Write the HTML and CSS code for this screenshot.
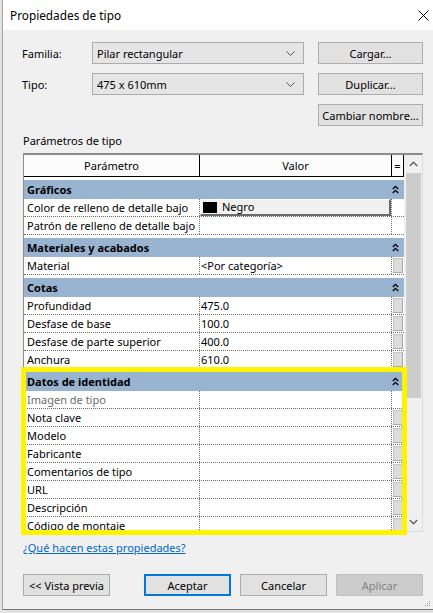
FILE: index.html
```html
<!DOCTYPE html>
<html lang="es">
<head>
<meta charset="utf-8">
<title>Propiedades de tipo</title>
<link rel="stylesheet" href="styles.css">
</head>
<body>
<div class="screen">
  <div class="dialog">
    <div class="titlebar">
      <span class="title">Propiedades de tipo</span>
      <svg class="close" width="11" height="11" viewBox="0 0 11 11"><path d="M0.5 0.5 L10.5 10.5 M10.5 0.5 L0.5 10.5" stroke="#000" stroke-width="1" fill="none"/></svg>
    </div>
    <div class="content">
      <div class="frow">
        <span class="flabel">Familia:</span>
        <div class="combo"><span>Pilar rectangular</span><svg width="9" height="5" viewBox="0 0 9 5"><path d="M0.5 0.5 L4.5 4.5 L8.5 0.5" stroke="#555" fill="none"/></svg></div>
        <div class="btn side">Cargar...</div>
      </div>
      <div class="frow">
        <span class="flabel">Tipo:</span>
        <div class="combo"><span>475 x 610mm</span><svg width="9" height="5" viewBox="0 0 9 5"><path d="M0.5 0.5 L4.5 4.5 L8.5 0.5" stroke="#555" fill="none"/></svg></div>
        <div class="btn side">Duplicar...</div>
      </div>
      <div class="frow end">
        <div class="btn side">Cambiar nombre...</div>
      </div>
      <div class="plabel">Parámetros de tipo</div>

      <div class="gridbox">
        <div class="grid">
          <div class="ghead">
            <div class="hc">Parámetro</div>
            <div class="hc hv">Valor</div>
            <div class="hc he">=</div>
          </div>
          <div class="gbody">
            <div class="sec"><div class="st">Gráficos</div><div></div><div class="sc"><svg width="7" height="9" viewBox="0 0 7 9"><path d="M0.8 4 L3.5 1.3 L6.2 4 M0.8 8 L3.5 5.3 L6.2 8" stroke="#000" stroke-width="1.3" fill="none"/></svg></div></div>
            <div class="row"><div class="c1">Color de relleno de detalle bajo</div><div class="c2"><div class="negro"><span class="swatch"></span>Negro</div></div><div class="c3"></div></div>
            <div class="row"><div class="c1">Patrón de relleno de detalle bajo</div><div class="c2"></div><div class="c3"></div></div>

            <div class="sec"><div class="st">Materiales y acabados</div><div></div><div class="sc"><svg width="7" height="9" viewBox="0 0 7 9"><path d="M0.8 4 L3.5 1.3 L6.2 4 M0.8 8 L3.5 5.3 L6.2 8" stroke="#000" stroke-width="1.3" fill="none"/></svg></div></div>
            <div class="row"><div class="c1">Material</div><div class="c2">&lt;Por categoría&gt;</div><div class="c3"><span class="eb"></span></div></div>

            <div class="sec"><div class="st">Cotas</div><div></div><div class="sc"><svg width="7" height="9" viewBox="0 0 7 9"><path d="M0.8 4 L3.5 1.3 L6.2 4 M0.8 8 L3.5 5.3 L6.2 8" stroke="#000" stroke-width="1.3" fill="none"/></svg></div></div>
            <div class="row"><div class="c1">Profundidad</div><div class="c2">475.0</div><div class="c3"><span class="eb"></span></div></div>
            <div class="row"><div class="c1">Desfase de base</div><div class="c2">100.0</div><div class="c3"><span class="eb"></span></div></div>
            <div class="row"><div class="c1">Desfase de parte superior</div><div class="c2">400.0</div><div class="c3"><span class="eb"></span></div></div>
            <div class="row"><div class="c1">Anchura</div><div class="c2">610.0</div><div class="c3"><span class="eb"></span></div></div>

            <div class="sec"><div class="st">Datos de identidad</div><div></div><div class="sc"><svg width="7" height="9" viewBox="0 0 7 9"><path d="M0.8 4 L3.5 1.3 L6.2 4 M0.8 8 L3.5 5.3 L6.2 8" stroke="#000" stroke-width="1.3" fill="none"/></svg></div></div>
            <div class="row"><div class="c1 dim">Imagen de tipo</div><div class="c2"></div><div class="c3"></div></div>
            <div class="row"><div class="c1">Nota clave</div><div class="c2"></div><div class="c3"><span class="eb"></span></div></div>
            <div class="row"><div class="c1">Modelo</div><div class="c2"></div><div class="c3"><span class="eb"></span></div></div>
            <div class="row"><div class="c1">Fabricante</div><div class="c2"></div><div class="c3"><span class="eb"></span></div></div>
            <div class="row"><div class="c1">Comentarios de tipo</div><div class="c2"></div><div class="c3"><span class="eb"></span></div></div>
            <div class="row"><div class="c1">URL</div><div class="c2"></div><div class="c3"><span class="eb"></span></div></div>
            <div class="row"><div class="c1">Descripción</div><div class="c2"></div><div class="c3"><span class="eb"></span></div></div>
            <div class="row"><div class="c1">Código de montaje</div><div class="c2"></div><div class="c3"><span class="eb"></span></div></div>
          </div>
        </div>
        <div class="scrollbar">
          <div class="sarrow"><svg width="9" height="6" viewBox="0 0 9 6"><path d="M0.8 5 L4.5 1.3 L8.2 5" stroke="#606060" stroke-width="1.4" fill="none"/></svg></div>
          <div class="thumb"></div>
          <div class="strack"></div>
          <div class="sarrow"><svg width="9" height="6" viewBox="0 0 9 6"><path d="M0.8 1 L4.5 4.7 L8.2 1" stroke="#606060" stroke-width="1.4" fill="none"/></svg></div>
        </div>
        <div class="highlight"></div>
      </div>

      <a class="help" href="#">¿Qué hacen estas propiedades?</a>

      <div class="buttons">
        <div class="btn bb first">&lt;&lt; Vista previa</div>
        <div class="btn bb default">Aceptar</div>
        <div class="btn bb">Cancelar</div>
        <div class="btn bb disabled">Aplicar</div>
      </div>
    </div>
    <svg class="grip" width="6" height="6" viewBox="0 0 6 6"><rect x="4" y="0" width="1" height="1" fill="#9a9a9a"/><rect x="2" y="2" width="1" height="1" fill="#9a9a9a"/><rect x="4" y="2" width="1" height="1" fill="#9a9a9a"/><rect x="0" y="4" width="1" height="1" fill="#9a9a9a"/><rect x="2" y="4" width="1" height="1" fill="#9a9a9a"/><rect x="4" y="4" width="1" height="1" fill="#9a9a9a"/></svg>
  </div>
</div>
</body>
</html>
```
FILE: styles.css
```css
* { box-sizing: border-box; }
html, body { margin: 0; padding: 0; }
body {
  font-family: "Noto Sans", "Open Sans", sans-serif;
  font-size: 11px;
  color: #000;
  background: #d4d4d4;
}
.screen {
  width: 433px;
  height: 613px;
  overflow: hidden;
  background: #e2e2e2;
  padding-left: 2px;
}
.dialog {
  position: relative;
  width: 431px;
  height: 610px;
  background: #f0f0f0;
  border-left: 1px solid #a6a6a6;
  border-bottom: 1px solid #7a7a7a;
  display: flex;
  flex-direction: column;
}
.titlebar {
  height: 30px;
  background: #fff;
  display: flex;
  align-items: center;
  justify-content: space-between;
  padding: 0 4px 0 7px;
  flex: none;
}
.title { font-size: 11.8px; }
.close { display: block; }
.content {
  padding: 12px 10px 0 19px;
  display: flex;
  flex-direction: column;
}
.frow {
  display: flex;
  align-items: center;
  height: 22px;
  margin-bottom: 9px;
}
.frow.end { justify-content: flex-end; margin-bottom: 0; }
.flabel { width: 70px; }
.combo {
  width: 212px;
  height: 22px;
  background: #e5e5e5;
  border: 1px solid #acacac;
  display: flex;
  align-items: center;
  justify-content: space-between;
  padding: 0 8px 0 4px;
  margin-right: 14px;
}
.combo svg { display: block; }
.btn {
  height: 22px;
  background: #e1e1e1;
  border: 1px solid #adadad;
  display: flex;
  align-items: center;
  justify-content: center;
}
.side { width: 105px; }
.plabel {
  margin-top: 7px;
  height: 16px;
  line-height: 16px;
  margin-left: 1px;
  margin-bottom: 4px;
}
.gridbox {
  position: relative;
  margin-left: 1px;
  width: 400px;
  height: 379px;
  border-style: solid;
  border-width: 2px 1px 1px 1px;
  border-color: #8c8c8c #dcdcdc #dcdcdc #8c8c8c;
  display: flex;
  background: #fff;
}
.grid {
  width: 380px;
  display: flex;
  flex-direction: column;
}
.ghead {
  height: 22px;
  display: grid;
  grid-template-columns: 175px 192px 13px;
  border-bottom: 1px solid #000;
  background: #fbfbfb;
  flex: none;
}
.hc {
  display: flex;
  align-items: center;
  justify-content: center;
  line-height: 20px;
}
.hv { border-left: 1px solid #000; }
.he { border-left: 1px solid #000; border-right: 1px solid #000; font-size: 11px; }
.gbody {
  flex: 1;
  overflow: hidden;
  background: #fff;
}
.sec {
  margin-top: 3px;
  height: 19px;
  background: #99b4d1;
  display: grid;
  grid-template-columns: 175px 192px 13px;
  align-items: center;
}
.st {
  font-weight: bold;
  padding-left: 3px;
  line-height: 19px;
  white-space: nowrap;
}
.sc { padding-left: 1px; display: flex; align-items: center; }
.sc svg { display: block; }
.row {
  height: 18px;
  display: grid;
  grid-template-columns: 175px 192px 13px;
  border-bottom: 1px dotted #6e6e6e;
}
.c1 {
  padding-left: 3px;
  line-height: 17px;
  white-space: nowrap;
  overflow: hidden;
}
.c1.dim { color: #6d6d6d; }
.c2 {
  border-left: 1px dotted #6e6e6e;
  padding-left: 1px;
  line-height: 17px;
  white-space: nowrap;
}
.c3 {
  border-left: 1px dotted #6e6e6e;
  position: relative;
}
.eb {
  display: block;
  width: 10px;
  height: 15px;
  margin: 1px 0 0 1px;
  background: #dcdcdc;
  border: 1px solid #a9a9a9;
  border-top-color: #c4c4c4;
  border-left-color: #c4c4c4;
}
.negro {
  height: 17px;
  margin-right: 0;
  background: #f0f0f0;
  border-style: solid;
  border-width: 1px 2px 2px 1px;
  border-color: #ffffff #6a6a6a #6a6a6a #ffffff;
  display: flex;
  align-items: center;
  line-height: 14px;
  margin-left: -1px;
}
.swatch {
  display: inline-block;
  width: 14px;
  height: 11px;
  background: #000;
  margin: 0 5px 0 2px;
}
.scrollbar {
  width: 18px;
  background: #f0f0f0;
  display: flex;
  flex-direction: column;
  padding: 0 1px 0 2px;
}
.sarrow {
  height: 18px;
  flex: none;
  display: flex;
  align-items: center;
  justify-content: center;
}
.sarrow svg { display: block; }
.thumb {
  height: 225px;
  background: #cdcdcd;
  flex: none;
}
.strack { flex: 1; }
.highlight {
  position: absolute;
  left: -3px;
  top: 212px;
  width: 386px;
  height: 168px;
  border: 5px solid #fff400;
  pointer-events: none;
}
.help {
  margin-top: 8px;
  margin-left: 1px;
  height: 16px;
  line-height: 16px;
  color: #0066cc;
  text-decoration: underline;
  align-self: flex-start;
}
.buttons {
  margin-top: 18px;
  display: flex;
  padding-left: 1px;
}
.bb { width: 87px; margin-left: 9px; }
.bb.first { margin-left: 0; margin-right: 25px; }
.bb.default { border: 2px solid #0078d7; }
.bb.disabled { background: #cccccc; border-color: #bfbfbf; color: #838383; }
.grip {
  position: absolute;
  right: 2px;
  bottom: 2px;
}
```
